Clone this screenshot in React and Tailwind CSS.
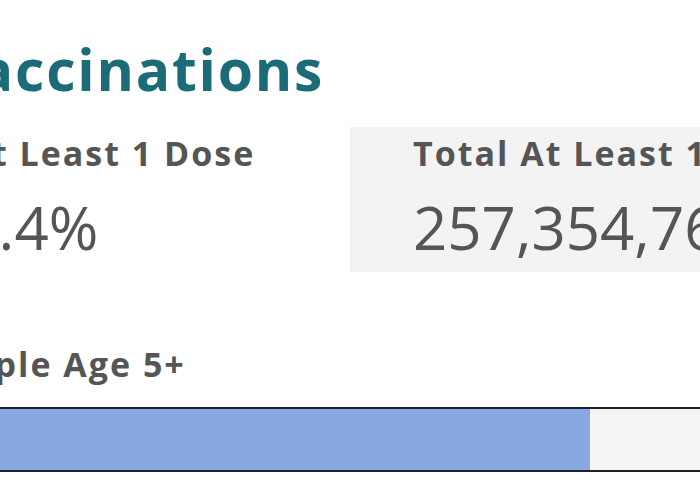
import React from 'react'

// ─── Stat block ──────────────────────────────────────────────────────────────
function Stat({ label, value, boxed, labelShift = '', valueShift = '' }) {
  return (
    <div
      className={
        boxed
          ? 'flex-1 bg-[#f3f3f3] pt-[6px] pb-[15px] pl-[63px]'
          : 'w-[412px] pt-[6px] pb-[15px]'
      }
    >
      <p className={`text-[34px] leading-[1.2] font-bold tracking-[2px] text-[#555555] whitespace-nowrap ${labelShift}`}>
        {label}
      </p>
      <p className={`mt-[23px] text-[60px] leading-none font-normal text-[#555555] whitespace-nowrap ${valueShift}`}>
        {value}
      </p>
    </div>
  )
}

// ─── Progress bar ────────────────────────────────────────────────────────────
function ProgressBar({ label, pct }) {
  return (
    <div className="mt-[72px]">
      <p className="ml-[-12px] text-[34px] leading-[1.2] font-bold tracking-[2px] text-[#555555] whitespace-nowrap">
        {label}
      </p>
      <div className="mt-[22px] h-[65px] border-y-2 border-[#1c1f2e] bg-[#f4f4f4] flex">
        <div className="h-full bg-[#87a8e0]" style={{ width: `${pct}%` }} />
      </div>
    </div>
  )
}

export default function App() {
  return (
    <div
      className="w-[700px] h-[500px] overflow-hidden bg-white"
      style={{ fontFamily: '"Open Sans", "Liberation Sans", sans-serif' }}
    >
      <div className="ml-[-62px] w-[900px]">
        <h1 className="ml-[2px] pt-[41px] text-[57px] leading-none font-bold tracking-[1.8px] text-[#1b6b78] whitespace-nowrap">
          Vaccinations
        </h1>

        <div className="mt-[29px] flex">
          <Stat
            label="% At Least 1 Dose"
            value="77.4%"
            labelShift="ml-[-15px]"
            valueShift="ml-[-8px]"
          />
          <Stat label="Total At Least 1 Dose" value="257,354,769" boxed />
        </div>

        <ProgressBar label="People Age 5+" pct={72.4} />
      </div>
    </div>
  )
}
